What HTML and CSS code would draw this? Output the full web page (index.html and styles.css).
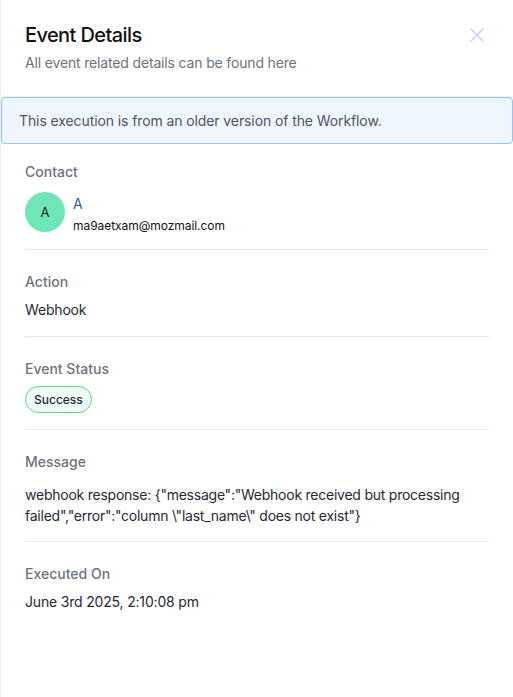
FILE: index.html
```html
<!DOCTYPE html>
<html>
<head>
<meta charset="utf-8">
<link rel="stylesheet" href="styles.css">
</head>
<body>
<div class="page">
  <div class="backdrop"></div>
  <aside class="drawer">
    <header class="header">
      <div class="titles">
        <h1 class="title">Event Details</h1>
        <p class="subtitle">All event related details can be found here</p>
      </div>
      <button class="close" aria-label="Close">
        <svg width="16" height="16" viewBox="0 0 16 16" fill="none" stroke="#c7d2fe" stroke-width="1.6" stroke-linecap="round"><path d="M2 2L14 14M14 2L2 14"/></svg>
      </button>
    </header>
    <div class="banner">This execution is from an older version of the Workflow.</div>
    <div class="body">
      <section class="section contact-sec">
        <div class="label">Contact</div>
        <div class="contact">
          <div class="avatar">A</div>
          <div class="contact-info">
            <div class="contact-name">A</div>
            <div class="contact-email">ma9aetxam@mozmail.com</div>
          </div>
        </div>
      </section>
      <section class="section">
        <div class="label">Action</div>
        <div class="value">Webhook</div>
      </section>
      <section class="section">
        <div class="label">Event Status</div>
        <div class="value badge-row"><span class="badge">Success</span></div>
      </section>
      <section class="section msg-sec">
        <div class="label">Message</div>
        <div class="value message">webhook response: {"message":"Webhook received but processing failed","error":"column \"last_name\" does not exist"}</div>
      </section>
      <section class="section last">
        <div class="label">Executed On</div>
        <div class="value">June 3rd 2025, 2:10:08 pm</div>
      </section>
    </div>
  </aside>
</div>
</body>
</html>
```

FILE: styles.css
```css
* { box-sizing: border-box; }
html, body { margin: 0; padding: 0; background: #fff; }
body {
  font-family: Inter, "Noto Sans", sans-serif;
  color: #1f2937;
  -webkit-font-smoothing: antialiased;
}
.page {
  display: flex;
  width: 513px;
  height: 697px;
  overflow: hidden;
}
.backdrop {
  width: 1px;
  flex: none;
  background: #ececec;
}
.drawer {
  flex: 1;
  display: flex;
  flex-direction: column;
  background: #fff;
}
.header {
  display: flex;
  justify-content: space-between;
  align-items: flex-start;
  padding: 22px 24px 0 24px;
  height: 97px;
  border-bottom: 1px solid #eef0f3;
}
.title {
  margin: 0;
  font-size: 20px;
  line-height: 26px;
  font-weight: 500;
  color: #111111;
  letter-spacing: -0.6px;
}
.subtitle {
  margin: 5px 0 0 0;
  font-size: 14px;
  line-height: 20px;
  color: #6b7280;
  letter-spacing: -0.16px;
}
.close {
  border: none;
  background: none;
  padding: 0;
  margin: 5px 4px 0 0;
  width: 16px;
  height: 16px;
  display: flex;
}
.banner {
  background: #eff6ff;
  border: 1px solid #93c5fd;
  border-radius: 4px;
  height: 47px;
  padding: 0 17px;
  display: flex;
  align-items: center;
  font-size: 14px;
  color: #4b5563;
  letter-spacing: -0.1px;
}
.body {
  padding: 0 24px;
}
.section {
  border-bottom: 1px solid #e5e7eb;
  padding: 22px 0 16px 0;
}
.section.last { border-bottom: none; }
.contact-sec { padding-top: 18px; padding-bottom: 17px; }
.msg-sec { padding-bottom: 15px; }
.label {
  font-size: 14px;
  line-height: 20px;
  font-weight: 500;
  color: #6b7280;
}
.value {
  margin-top: 8px;
  font-size: 14px;
  line-height: 20px;
  color: #1f2937;
  letter-spacing: -0.18px;
}
.badge-row { margin-top: 7px; display: flex; }
.message {
  margin-top: 12px;
  line-height: 21px;
  letter-spacing: -0.24px;
}
.contact {
  display: flex;
  align-items: flex-start;
  gap: 8px;
  height: 40px;
  margin-top: 10px;
}
.avatar {
  width: 40px;
  height: 40px;
  border-radius: 50%;
  background: #6ee7b7;
  color: #111827;
  font-size: 13px;
  display: flex;
  align-items: center;
  justify-content: center;
  flex: none;
}
.contact-info {
  display: flex;
  flex-direction: column;
  gap: 5px;
  padding-top: 3px;
}
.contact-name {
  font-size: 14px;
  line-height: 18px;
  color: #1d5f94;
}
.contact-email {
  font-size: 12px;
  line-height: 16px;
  color: #111111;
  letter-spacing: -0.05px;
}
.badge {
  display: inline-flex;
  align-items: center;
  height: 27px;
  padding: 0 8px;
  border: 1px solid #4ade80;
  background: #f0fdf4;
  border-radius: 14px;
  font-size: 12px;
  font-weight: 500;
  color: #1f2937;
  letter-spacing: 0;
}
```
